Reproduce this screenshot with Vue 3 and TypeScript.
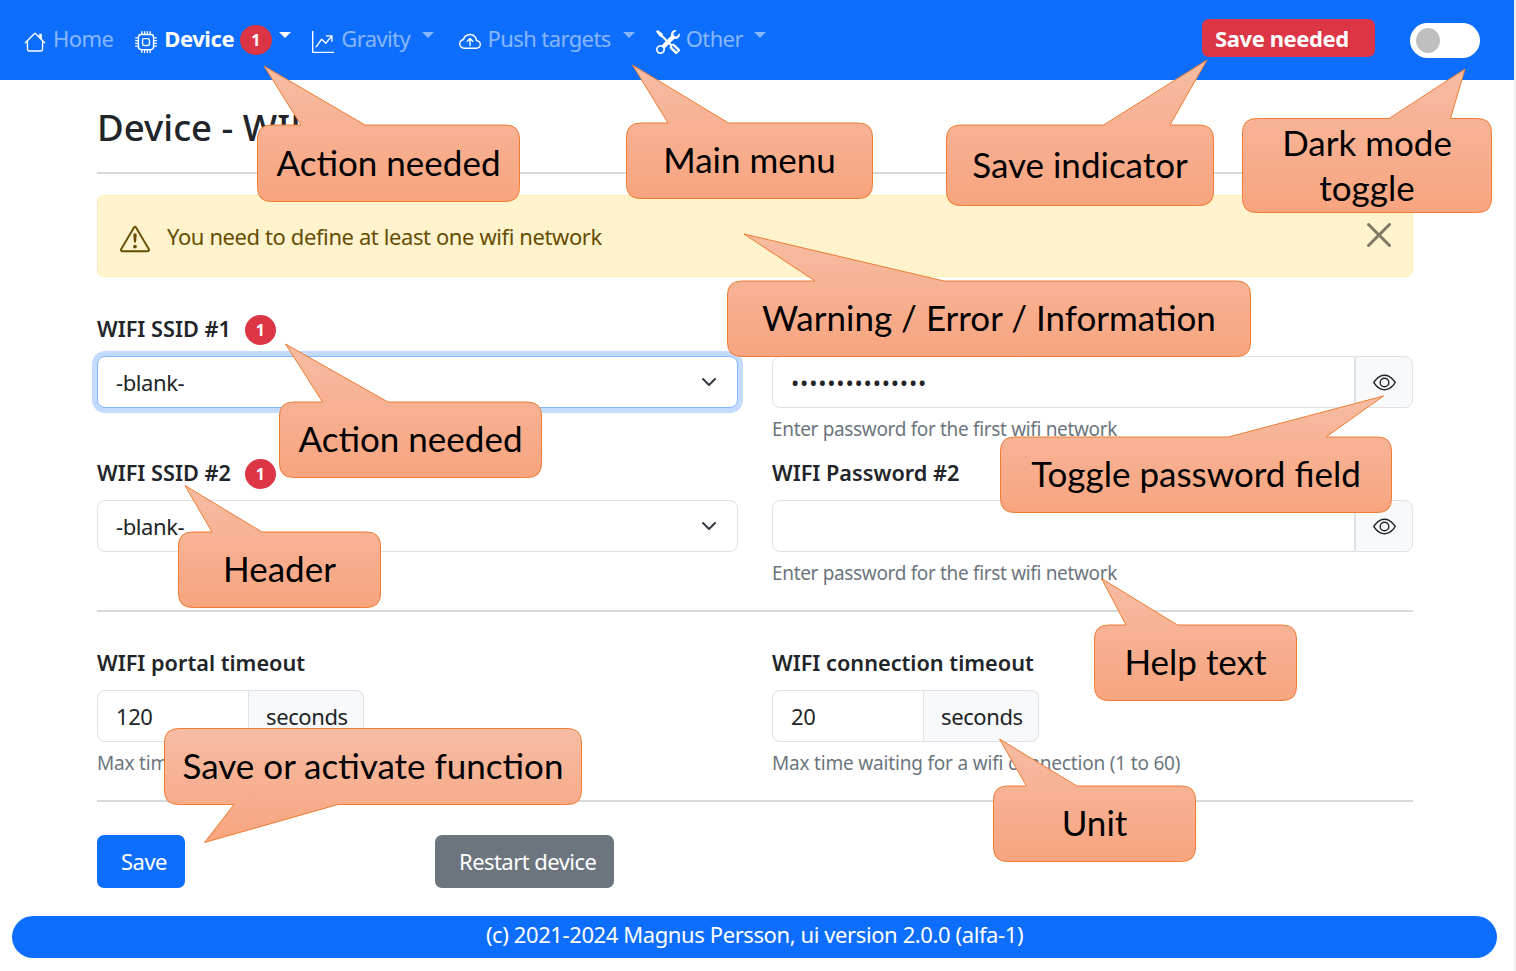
<script setup lang="ts">
import { ref } from "vue";

type Callout = {
  text: string;
  x: number;
  y: number;
  w: number;
  h: number;
  tip: [number, number];
  base: [number, number];
  side: "top" | "bottom";
};

const ssid1 = ref("");
const ssid2 = ref("");
const pass1 = ref("password1234567");
const pass2 = ref("");
const portal = ref(120);
const connect = ref(20);
const dark = ref(false);

const callouts: Callout[] = [
  { text: "Action needed", x: 257.5, y: 125, w: 262, h: 76.5, tip: [264, 66], base: [301, 365], side: "top" },
  { text: "Main menu", x: 626.5, y: 123, w: 246, h: 75.5, tip: [632.5, 65], base: [668, 728.5], side: "top" },
  { text: "Save indicator", x: 946.5, y: 125, w: 267, h: 80.5, tip: [1207, 60], base: [1103.5, 1170], side: "top" },
  { text: "Dark mode toggle", x: 1242.5, y: 118.5, w: 249, h: 94, tip: [1465, 69], base: [1389, 1450.5], side: "top" },
  { text: "Warning / Error / Information", x: 727.5, y: 281, w: 523, h: 75.5, tip: [744, 234], base: [815, 944], side: "top" },
  { text: "Action needed", x: 279.5, y: 402, w: 262, h: 75.5, tip: [285.5, 344], base: [322.5, 388], side: "top" },
  { text: "Header", x: 178.5, y: 532, w: 202, h: 75.5, tip: [185, 485.5], base: [212, 262], side: "top" },
  { text: "Toggle password field", x: 1000.5, y: 437, w: 391, h: 75.5, tip: [1383.5, 396], base: [1228.5, 1326], side: "top" },
  { text: "Help text", x: 1094.5, y: 625, w: 202, h: 75.5, tip: [1101.5, 578.5], base: [1126, 1177.5], side: "top" },
  { text: "Unit", x: 993.5, y: 786, w: 202, h: 75.5, tip: [999.5, 739], base: [1026.5, 1077], side: "top" },
  { text: "Save or activate function", x: 164.5, y: 728.5, w: 417, h: 76, tip: [204.5, 842.5], base: [234, 338], side: "bottom" },
];

function bubble(c: Callout) {
  const r = 14;
  const right = c.x + c.w;
  const bottom = c.y + c.h;
  const top =
    c.side === "top" ? `L${c.base[0]} ${c.y} L${c.tip[0]} ${c.tip[1]} L${c.base[1]} ${c.y} ` : "";
  const low =
    c.side === "bottom" ? `L${c.base[1]} ${bottom} L${c.tip[0]} ${c.tip[1]} L${c.base[0]} ${bottom} ` : "";
  return (
    `M${c.x + r} ${c.y} ${top}L${right - r} ${c.y} Q${right} ${c.y} ${right} ${c.y + r} ` +
    `L${right} ${bottom - r} Q${right} ${bottom} ${right - r} ${bottom} ${low}` +
    `L${c.x + r} ${bottom} Q${c.x} ${bottom} ${c.x} ${bottom - r} L${c.x} ${c.y + r} Q${c.x} ${c.y} ${c.x + r} ${c.y} Z`
  );
}
</script>

<template>
  <div class="shell">
    <nav class="navbar">
      <a class="link home">
        <svg class="navIcon" viewBox="0 0 16 16" fill="#fff">
          <path fill-rule="evenodd" d="M2 13.5V7h1v6.5a.5.5 0 0 0 .5.5h9a.5.5 0 0 0 .5-.5V7h1v6.5a1.5 1.5 0 0 1-1.5 1.5h-9A1.5 1.5 0 0 1 2 13.5zm11-11V6l-2-2V2.5a.5.5 0 0 1 .5-.5h1a.5.5 0 0 1 .5.5z" />
          <path fill-rule="evenodd" d="M7.293 1.5a1 1 0 0 1 1.414 0l6.647 6.646a.5.5 0 0 1-.708.708L8 2.207 1.354 8.854a.5.5 0 1 1-.708-.708L7.293 1.5z" />
        </svg>
        Home
      </a>
      <a class="link active device">
        <svg class="navIcon" viewBox="0 0 16 16" fill="#fff">
          <path d="M5 0a.5.5 0 0 1 .5.5V2h1V.5a.5.5 0 0 1 1 0V2h1V.5a.5.5 0 0 1 1 0V2h1V.5a.5.5 0 0 1 1 0V2A2.5 2.5 0 0 1 14 4.5h1.5a.5.5 0 0 1 0 1H14v1h1.5a.5.5 0 0 1 0 1H14v1h1.5a.5.5 0 0 1 0 1H14v1h1.5a.5.5 0 0 1 0 1H14a2.5 2.5 0 0 1-2.5 2.5v1.5a.5.5 0 0 1-1 0V14h-1v1.5a.5.5 0 0 1-1 0V14h-1v1.5a.5.5 0 0 1-1 0V14h-1v1.5a.5.5 0 0 1-1 0V14A2.5 2.5 0 0 1 2 11.5H.5a.5.5 0 0 1 0-1H2v-1H.5a.5.5 0 0 1 0-1H2v-1H.5a.5.5 0 0 1 0-1H2v-1H.5a.5.5 0 0 1 0-1H2A2.5 2.5 0 0 1 4.5 2V.5A.5.5 0 0 1 5 0zm-.5 3A1.5 1.5 0 0 0 3 4.5v7A1.5 1.5 0 0 0 4.5 13h7a1.5 1.5 0 0 0 1.5-1.5v-7A1.5 1.5 0 0 0 11.5 3h-7zM5 6.5A1.5 1.5 0 0 1 6.5 5h3A1.5 1.5 0 0 1 11 6.5v3A1.5 1.5 0 0 1 9.5 11h-3A1.5 1.5 0 0 1 5 9.5v-3zM6.5 6a.5.5 0 0 0-.5.5v3a.5.5 0 0 0 .5.5h3a.5.5 0 0 0 .5-.5v-3a.5.5 0 0 0-.5-.5h-3z" />
        </svg>
        Device
        <span class="pill navPill">1</span>
        <span class="caret tight" />
      </a>
      <a class="link gravity">
        <svg class="navIcon" viewBox="0 0 16 16" fill="#fff">
          <path fill-rule="evenodd" d="M0 0h1v15h15v1H0V0Zm10 3.5a.5.5 0 0 1 .5-.5h4a.5.5 0 0 1 .5.5v4a.5.5 0 0 1-1 0V4.9l-3.613 4.417a.5.5 0 0 1-.74.037L7.06 6.767l-3.656 5.027a.5.5 0 0 1-.808-.588l4-5.5a.5.5 0 0 1 .758-.06l2.609 2.61L13.445 4H10.5a.5.5 0 0 1-.5-.5Z" />
        </svg>
        Gravity
        <span class="caret" />
      </a>
      <a class="link push">
        <svg class="navIcon" viewBox="0 0 16 16" fill="#fff">
          <path fill-rule="evenodd" d="M7.646 5.146a.5.5 0 0 1 .708 0l2 2a.5.5 0 0 1-.708.708L8.5 6.707V10.5a.5.5 0 0 1-1 0V6.707L6.354 7.854a.5.5 0 1 1-.708-.708l2-2z" />
          <path d="M4.406 3.342A5.53 5.53 0 0 1 8 2c2.69 0 4.923 2 5.166 4.579C14.758 6.804 16 8.137 16 9.773 16 11.569 14.502 13 12.687 13H3.781C1.708 13 0 11.366 0 9.318c0-1.763 1.266-3.223 2.942-3.593.143-.863.698-1.723 1.464-2.383zm.653.757c-.757.653-1.153 1.44-1.153 2.056v.448l-.445.049C2.064 6.805 1 7.952 1 9.318 1 10.785 2.23 12 3.781 12h8.906C13.98 12 15 10.988 15 9.773c0-1.216-1.02-2.228-2.313-2.228h-.5v-.5C12.188 4.825 10.328 3 8 3a4.53 4.53 0 0 0-2.941 1.1z" />
        </svg>
        Push targets
        <span class="caret" />
      </a>
      <a class="link other">
        <svg class="navIcon" viewBox="0 0 16 16" fill="#fff">
          <path d="M1 0 0 1l2.2 3.081a1 1 0 0 0 .815.419h.07a1 1 0 0 1 .708.293l2.675 2.675-2.617 2.654A3.003 3.003 0 0 0 0 13a3 3 0 1 0 5.878-.851l2.654-2.617.968.968-.305.914a1 1 0 0 0 .242 1.023l3.27 3.27a.997.997 0 0 0 1.414 0l1.586-1.586a.997.997 0 0 0 0-1.414l-3.27-3.27a1 1 0 0 0-1.023-.242L10.5 9.5l-.96-.96 2.68-2.643A3.005 3.005 0 0 0 16 3c0-.269-.035-.53-.102-.777l-2.14 2.141L12 4l-.364-1.757L13.777.102a3 3 0 0 0-3.675 3.68L7.462 6.46 4.793 3.793a1 1 0 0 1-.293-.707v-.071a1 1 0 0 0-.419-.814L1 0Zm9.646 10.646a.5.5 0 0 1 .708 0l2.914 2.915a.456.456 0 0 1-.013.644.456.456 0 0 1-.644.013l-2.915-2.914a.5.5 0 0 1 0-.708ZM3 11l.471.242.529.026.287.445.445.287.026.529L5 13l-.242.471-.026.529-.445.287-.287.445-.529.026L3 15l-.471-.242L2 14.732l-.287-.445L1.268 14l-.026-.529L1 13l.242-.471.026-.529.445-.287.287-.445.529-.026L3 11Z" />
        </svg>
        Other
        <span class="caret" />
      </a>
      <span class="saveBadge">Save needed</span>
      <label class="switch">
        <input v-model="dark" type="checkbox" />
        <span class="knob" />
      </label>
    </nav>

    <main class="page">
      <h1 class="title">Device - WIFI</h1>
      <hr class="rule first" />

      <div class="alert">
        <svg class="warnIcon" viewBox="0 0 16 16" fill="#664d03">
          <path d="M7.938 2.016A.13.13 0 0 1 8.002 2a.13.13 0 0 1 .063.016.146.146 0 0 1 .054.057l6.857 11.667c.036.06.035.124.002.183a.163.163 0 0 1-.054.06.116.116 0 0 1-.066.017H1.146a.115.115 0 0 1-.066-.017.163.163 0 0 1-.054-.06.176.176 0 0 1 .002-.183L7.884 2.073a.147.147 0 0 1 .054-.057zm1.044-.45a1.13 1.13 0 0 0-1.96 0L.165 13.233c-.457.778.091 1.767.98 1.767h13.713c.889 0 1.438-.99.98-1.767L8.982 1.566z" />
          <path d="M7.002 12a1 1 0 1 1 2 0 1 1 0 0 1-2 0zM7.1 5.995a.905.905 0 1 1 1.8 0l-.35 3.507a.552.552 0 0 1-1.1 0L7.1 5.995z" />
        </svg>
        <span class="alertText">You need to define at least one wifi network</span>
        <button type="button" class="close" aria-label="Close">
          <svg viewBox="0 0 16 16" fill="#000">
            <path d="M.293.293a1 1 0 011.414 0L8 6.586 14.293.293a1 1 0 111.414 1.414L9.414 8l6.293 6.293a1 1 0 01-1.414 1.414L8 9.414l-6.293 6.293a1 1 0 01-1.414-1.414L6.586 8 .293 1.707a1 1 0 010-1.414z" />
          </svg>
        </button>
      </div>

      <div class="grid">
        <div class="field">
          <label class="label">WIFI SSID #1 <span class="pill labelPill">1</span></label>
          <select v-model="ssid1" class="control select focused">
            <option value="">-blank-</option>
          </select>
        </div>
        <div class="field">
          <label class="label">WIFI Password #1</label>
          <div class="group">
            <input v-model="pass1" class="control joined secret" type="password" />
            <span class="addon eye">
              <svg viewBox="0 0 16 16" fill="#212529">
                <path d="M16 8s-3-5.5-8-5.5S0 8 0 8s3 5.5 8 5.5S16 8 16 8zM1.173 8a13.133 13.133 0 0 1 1.66-2.043C4.12 4.668 5.88 3.5 8 3.5c2.12 0 3.879 1.168 5.168 2.457A13.133 13.133 0 0 1 14.828 8c-.058.087-.122.183-.195.288-.335.48-.83 1.12-1.465 1.755C11.879 11.332 10.119 12.5 8 12.5c-2.12 0-3.879-1.168-5.168-2.457A13.134 13.134 0 0 1 1.172 8z" />
                <path d="M8 5.5a2.5 2.5 0 1 0 0 5 2.5 2.5 0 0 0 0-5zM4.5 8a3.5 3.5 0 1 1 7 0 3.5 3.5 0 0 1-7 0z" />
              </svg>
            </span>
          </div>
          <div class="help">Enter password for the first wifi network</div>
        </div>

        <div class="field">
          <label class="label">WIFI SSID #2 <span class="pill labelPill">1</span></label>
          <select v-model="ssid2" class="control select">
            <option value="">-blank-</option>
          </select>
        </div>
        <div class="field">
          <label class="label">WIFI Password #2</label>
          <div class="group">
            <input v-model="pass2" class="control joined secret" type="password" />
            <span class="addon eye">
              <svg viewBox="0 0 16 16" fill="#212529">
                <path d="M16 8s-3-5.5-8-5.5S0 8 0 8s3 5.5 8 5.5S16 8 16 8zM1.173 8a13.133 13.133 0 0 1 1.66-2.043C4.12 4.668 5.88 3.5 8 3.5c2.12 0 3.879 1.168 5.168 2.457A13.133 13.133 0 0 1 14.828 8c-.058.087-.122.183-.195.288-.335.48-.83 1.12-1.465 1.755C11.879 11.332 10.119 12.5 8 12.5c-2.12 0-3.879-1.168-5.168-2.457A13.134 13.134 0 0 1 1.172 8z" />
                <path d="M8 5.5a2.5 2.5 0 1 0 0 5 2.5 2.5 0 0 0 0-5zM4.5 8a3.5 3.5 0 1 1 7 0 3.5 3.5 0 0 1-7 0z" />
              </svg>
            </span>
          </div>
          <div class="help">Enter password for the first wifi network</div>
        </div>
      </div>

      <hr class="rule second" />

      <div class="grid lower">
        <div class="field">
          <label class="label">WIFI portal timeout</label>
          <div class="group short">
            <input v-model="portal" class="control joined" type="text" />
            <span class="addon">seconds</span>
          </div>
          <div class="help wide">Max time in the wifi portal (10 to 240)</div>
        </div>
        <div class="field">
          <label class="label">WIFI connection timeout</label>
          <div class="group short">
            <input v-model="connect" class="control joined" type="text" />
            <span class="addon">seconds</span>
          </div>
          <div class="help wide">Max time waiting for a wifi connection (1 to 60)</div>
        </div>
      </div>

      <hr class="rule third" />

      <div class="actions">
        <button type="button" class="btn primary">Save</button>
        <button type="button" class="btn secondary">Restart device</button>
      </div>
    </main>

    <footer class="footer">(c) 2021-2024 Magnus Persson, ui version 2.0.0 (alfa-1)</footer>

    <!-- annotations lying over the page -->
    <svg class="bubbles" width="1516" height="971">
      <defs>
        <linearGradient id="bubbleFill" x1="0" y1="0" x2="0" y2="1">
          <stop offset="0" stop-color="#f6bca3" />
          <stop offset="1" stop-color="#f8a47f" />
        </linearGradient>
      </defs>
      <path v-for="c in callouts" :key="c.text + c.x" :d="bubble(c)" fill="url(#bubbleFill)" stroke="#ed7d31" stroke-width="1" />
    </svg>
    <div
      v-for="c in callouts"
      :key="c.x"
      class="bubbleText"
      :style="{ left: c.x + 'px', top: c.y + 'px', width: c.w + 'px', height: c.h + 'px' }"
    >
      {{ c.text }}
    </div>
  </div>
</template>

<style scoped>
.shell {
  position: relative;
  width: 1516px;
  height: 971px;
  box-sizing: border-box;
  overflow: hidden;
  border-right: 2px solid #f0f0f0;
  background: #fff;
  color: #212529;
  font-family: "Noto Sans", sans-serif;
  font-size: 22px;
  letter-spacing: -0.4px;
}

.navbar {
  display: flex;
  align-items: center;
  width: 1514px;
  height: 80px;
  box-sizing: border-box;
  padding-left: 24px;
  background: #0d6efd;
}

.link {
  display: flex;
  align-items: center;
  gap: 7px;
  margin-top: -4px;
  color: rgba(255, 255, 255, 0.5);
  letter-spacing: -0.6px;
  white-space: nowrap;
}

.active {
  color: #fff;
  font-weight: 700;
  letter-spacing: -0.4px;
}

.navIcon {
  width: 22px;
  height: 22px;
  flex: none;
  margin-top: 7px;
}

.device {
  margin-left: 22px;
}

.gravity,
.other {
  margin-left: 21px;
}

.push {
  margin-left: 24.5px;
}

.other {
  gap: 6px;
}

.other .navIcon {
  width: 24px;
  height: 24px;
}

.caret {
  width: 0;
  height: 0;
  margin-left: 5px;
  margin-top: -7px;
  border-top: 6px solid currentColor;
  border-left: 6px solid transparent;
  border-right: 6px solid transparent;
}

.caret.tight {
  margin-left: 0.5px;
}

.pill {
  display: inline-flex;
  align-items: center;
  justify-content: center;
  border-radius: 50%;
  background: #dc3545;
  color: #fff;
  font-weight: 700;
  font-size: 16px;
  letter-spacing: 0;
}

.navPill {
  width: 32px;
  height: 30px;
  margin-left: -1.5px;
  margin-top: 4px;
}

.saveBadge {
  display: flex;
  align-items: center;
  width: 173px;
  height: 38px;
  box-sizing: border-box;
  margin-left: auto;
  margin-top: -4px;
  padding-left: 13px;
  border-radius: 7px;
  background: #dc3545;
  color: #fff;
  font-weight: 700;
  white-space: nowrap;
}

.switch {
  position: relative;
  display: block;
  width: 70px;
  height: 35px;
  margin: 1px 34px 0 35px;
  border-radius: 18px;
  background: #fff;
}

.switch input {
  display: none;
}

.knob {
  position: absolute;
  left: 6px;
  top: 5px;
  width: 24px;
  height: 25px;
  border-radius: 50%;
  background: #bfbfbf;
}

.page {
  width: 1316px;
  margin-left: 97px;
}

.title {
  margin: 23px 0 0;
  font-size: 36.6px;
  font-weight: 500;
  line-height: 48px;
  letter-spacing: 0;
}

.rule {
  height: 2px;
  margin: 0;
  border: 0;
  background: #d8d9da;
}

.rule.first {
  margin-top: 21px;
}

.rule.second,
.rule.third {
  margin-top: 26px;
}

.alert {
  display: flex;
  align-items: center;
  height: 82px;
  box-sizing: border-box;
  margin-top: 21px;
  padding: 0 21px 0 22px;
  border: 1px solid #ffecb5;
  border-radius: 7px;
  background: #fff3cd;
  color: #664d03;
}

.warnIcon {
  width: 30px;
  height: 30px;
  flex: none;
  margin-top: 6px;
}

.alertText {
  margin-left: 17px;
}

.close {
  width: 24px;
  height: 24px;
  margin-left: auto;
  margin-top: -2px;
  padding: 0;
  border: 0;
  background: none;
  opacity: 0.5;
}

.grid {
  display: grid;
  grid-template-columns: 641px 641px;
  column-gap: 34px;
  row-gap: 18px;
  margin-top: 37px;
}

.grid.lower {
  margin-top: 36px;
}

.label {
  display: flex;
  align-items: center;
  gap: 14px;
  height: 30px;
  box-sizing: border-box;
  margin-bottom: 12px;
  padding-bottom: 2px;
  font-weight: 600;
  font-size: 21.7px;
  letter-spacing: 0;
}

.labelPill {
  width: 31px;
  height: 30px;
  flex: none;
  margin-top: 4px;
}

.control {
  display: block;
  width: 100%;
  height: 52px;
  box-sizing: border-box;
  padding: 0 18px;
  border: 1.5px solid #dee2e6;
  border-radius: 8px;
  background-color: #fff;
  color: #212529;
  font-family: inherit;
  font-size: inherit;
  letter-spacing: inherit;
  outline: none;
}

.secret {
  letter-spacing: 0.8px;
}

.select {
  appearance: none;
  background-image: url("data:image/svg+xml,%3csvg xmlns='http://www.w3.org/2000/svg' viewBox='0 0 16 16'%3e%3cpath fill='none' stroke='%23343a40' stroke-linecap='round' stroke-linejoin='round' stroke-width='2' d='m2 5 6 6 6-6'/%3e%3c/svg%3e");
  background-repeat: no-repeat;
  background-position: right 17px center;
  background-size: 22px 16px;
}

.focused {
  border-color: #86b7fe;
  box-shadow: 0 0 0 5px rgba(13, 110, 253, 0.25);
}

.group {
  display: flex;
  height: 52px;
}

.short {
  width: 267px;
}

.joined {
  flex: 1;
  min-width: 0;
  border-radius: 8px 0 0 8px;
}

.addon {
  display: flex;
  align-items: center;
  width: 115px;
  flex: none;
  box-sizing: border-box;
  padding: 0 17px;
  border: 1.5px solid #dee2e6;
  border-left: 0;
  border-radius: 0 8px 8px 0;
  background: #f8f9fa;
  white-space: nowrap;
}

.eye {
  width: 58px;
  justify-content: center;
  padding: 0;
  border-left: 1.5px solid #dee2e6;
}

.eye svg {
  width: 23px;
  height: 23px;
}

.help {
  margin-top: 10px;
  color: #6c757d;
  font-size: 19px;
  line-height: 22px;
  letter-spacing: -0.34px;
}

.help.wide {
  letter-spacing: -0.19px;
}

.actions {
  display: flex;
  gap: 250px;
  margin-top: 33px;
}

.btn {
  height: 53px;
  box-sizing: border-box;
  padding: 0 18px 2px 24px;
  border: 0;
  border-radius: 7px;
  color: #fff;
  font-family: inherit;
  font-size: inherit;
  letter-spacing: -0.55px;
}

.primary {
  min-width: 88px;
  background: #0d6efd;
}

.secondary {
  background: #6c757d;
}

.footer {
  display: flex;
  align-items: center;
  justify-content: center;
  width: 1485px;
  height: 42px;
  box-sizing: border-box;
  margin: 28px 0 0 12px;
  padding-bottom: 7px;
  border-radius: 21px;
  background: #0d6efd;
  color: #fff;
}

.bubbles {
  position: absolute;
  left: 0;
  top: 0;
}

.bubbleText {
  position: absolute;
  display: flex;
  align-items: center;
  justify-content: center;
  box-sizing: border-box;
  padding-bottom: 2px;
  color: #000;
  font-family: Lato, sans-serif;
  font-size: 35px;
  line-height: 45px;
  letter-spacing: 0;
  text-align: center;
}
</style>
